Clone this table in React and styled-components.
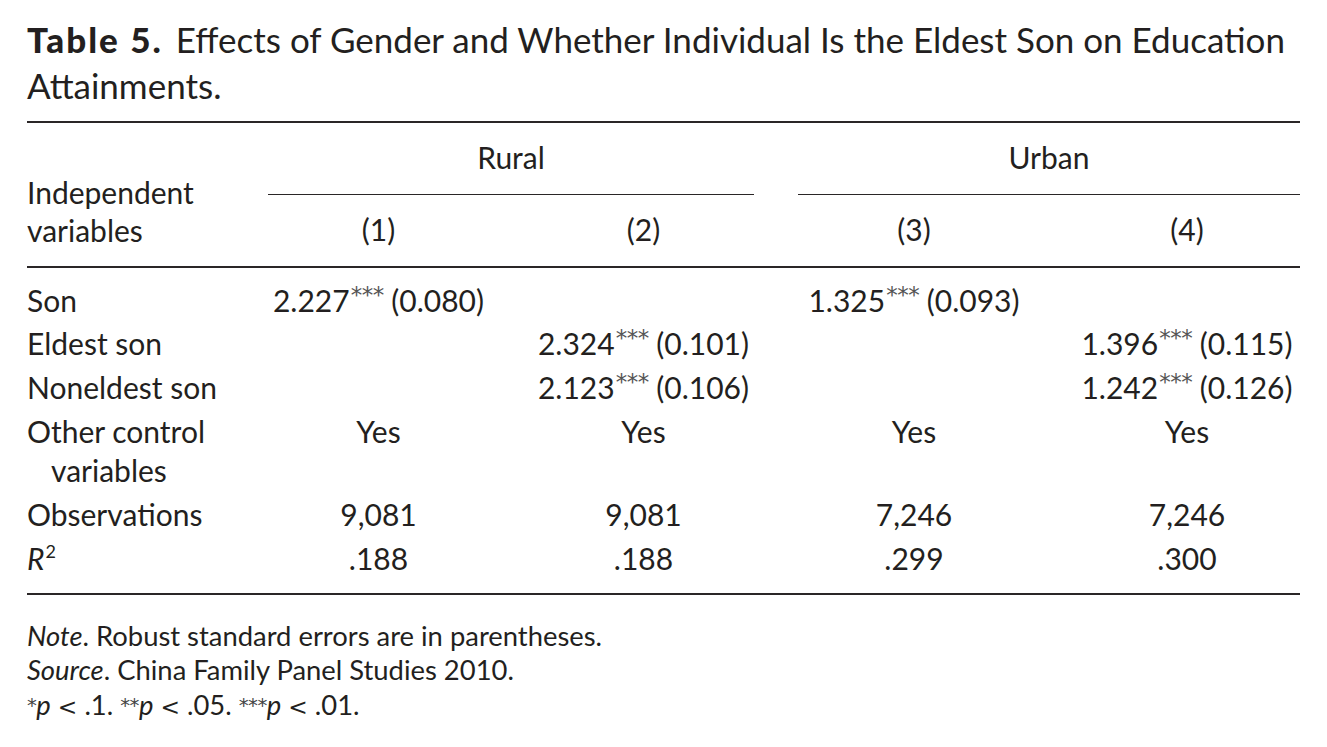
import React from "react";
import styled, { createGlobalStyle } from "styled-components";

const Global = createGlobalStyle`
  html, body { margin: 0; padding: 0; background: #ffffff; }
  body { font-family: "Lato", "Open Sans", sans-serif; color: #231f20; }
`;

const Page = styled.div`
  width: 1273px;
  padding: 15.5px 0 0 27px;
`;

const Title = styled.h1`
  margin: 0;
  font-size: 35px;
  line-height: 46px;
  font-weight: 400;
  white-space: nowrap;
`;

const TitleLabel = styled.span`
  font-weight: 900;
  letter-spacing: 2px;
  margin-right: 13px;
`;

const Rule = styled.div`
  height: 2px;
  background: #2a2627;
  margin-top: ${(p) => p.$top || 0}px;
`;

const cols = "197px 221px 221px 232px 226px";

const HeaderGrid = styled.div`
  display: grid;
  grid-template-columns: ${cols};
  column-gap: 44px;
  padding: 14.8px 0 16.2px;
  font-size: 30px;
  line-height: 39px;
`;

const HeadStub = styled.div`
  grid-row: 1 / span 2;
  grid-column: 1;
  align-self: end;
  line-height: 38.3px;
`;

const Spanner = styled.div`
  grid-row: 1;
  grid-column: ${(p) => p.$col} / span 2;
  text-align: center;
  padding-bottom: 17.6px;
  border-bottom: 1.8px solid #2a2627;
`;

const ColLabel = styled.div`
  grid-row: 2;
  text-align: center;
  padding-top: 15px;
`;

const Body = styled.div`
  padding: 10.7px 0 13.5px;
  font-size: 30px;
  line-height: 39px;
`;

const Row = styled.div`
  display: grid;
  grid-template-columns: ${cols};
  column-gap: 44px;
  padding: 2.4px 0;
`;

const Stub = styled.div`
  padding-left: 24px;
  text-indent: -24px;
  white-space: ${(p) => (p.$wrap ? "normal" : "nowrap")};
`;

const Cell = styled.div`
  text-align: center;
  white-space: nowrap;
`;

const Stars = styled.span`
  display: inline-block;
  font-family: "DejaVu Sans", sans-serif;
  font-size: 23px;
  line-height: 1;
  vertical-align: top;
  margin-top: 3px;
  color: #555;
  font-weight: 400;
  letter-spacing: -0.5px;
  margin-left: 1px;
`;

const Sup = styled.span`
  font-size: 0.6em;
  position: relative;
  top: -0.62em;
  line-height: 0;
  margin-left: 1px;
`;

const Notes = styled.div`
  margin-top: 23.5px;
  font-size: 27.4px;
  line-height: 34.5px;
`;

const NoteLine = styled.div``;

const Ital = styled.i`
  font-style: italic;
`;

const NoteStar = styled.span`
  position: relative;
  top: -0.15em;
  font-family: "DejaVu Sans", sans-serif;
  font-size: 0.72em;
  letter-spacing: -0.5px;
  color: #444;
  line-height: 0;
`;

const Lt = styled.span`
  font-family: "DejaVu Sans", sans-serif;
  font-size: 0.85em;
`;

function Val({ v, se }) {
  return (
    <>
      {v}
      <Stars>***</Stars> ({se})
    </>
  );
}

const rows = [
  { label: "Son", cells: [<Val v="2.227" se="0.080" />, "", <Val v="1.325" se="0.093" />, ""] },
  { label: "Eldest son", cells: ["", <Val v="2.324" se="0.101" />, "", <Val v="1.396" se="0.115" />] },
  { label: "Noneldest son", cells: ["", <Val v="2.123" se="0.106" />, "", <Val v="1.242" se="0.126" />] },
  { label: "Other control variables", wrap: true, cells: ["Yes", "Yes", "Yes", "Yes"] },
  { label: "Observations", cells: ["9,081", "9,081", "7,246", "7,246"] },
  {
    label: (
      <>
        <Ital>R</Ital>
        <Sup>2</Sup>
      </>
    ),
    cells: [".188", ".188", ".299", ".300"],
  },
];

export default function App() {
  return (
    <>
      <Global />
      <Page>
        <Title>
          <TitleLabel>Table 5.</TitleLabel>Effects of Gender and Whether Individual Is the Eldest Son on Education
          <br />
          Attainments.
        </Title>
        <Rule $top={13.5} />
        <HeaderGrid>
          <HeadStub>
            Independent
            <br />
            variables
          </HeadStub>
          <Spanner $col={2}>Rural</Spanner>
          <Spanner $col={4}>Urban</Spanner>
          {["(1)", "(2)", "(3)", "(4)"].map((l) => (
            <ColLabel key={l}>{l}</ColLabel>
          ))}
        </HeaderGrid>
        <Rule />
        <Body>
          {rows.map((r, i) => (
            <Row key={i}>
              <Stub $wrap={r.wrap}>{r.label}</Stub>
              {r.cells.map((c, j) => (
                <Cell key={j}>{c}</Cell>
              ))}
            </Row>
          ))}
        </Body>
        <Rule />
        <Notes>
          <NoteLine>
            <Ital>Note</Ital>. Robust standard errors are in parentheses.
          </NoteLine>
          <NoteLine>
            <Ital>Source</Ital>. China Family Panel Studies 2010.
          </NoteLine>
          <NoteLine>
            <NoteStar>*</NoteStar>
            <Ital>p</Ital> <Lt>&lt;</Lt> .1. <NoteStar>**</NoteStar>
            <Ital>p</Ital> <Lt>&lt;</Lt> .05. <NoteStar>***</NoteStar>
            <Ital>p</Ital> <Lt>&lt;</Lt> .01.
          </NoteLine>
        </Notes>
      </Page>
    </>
  );
}
